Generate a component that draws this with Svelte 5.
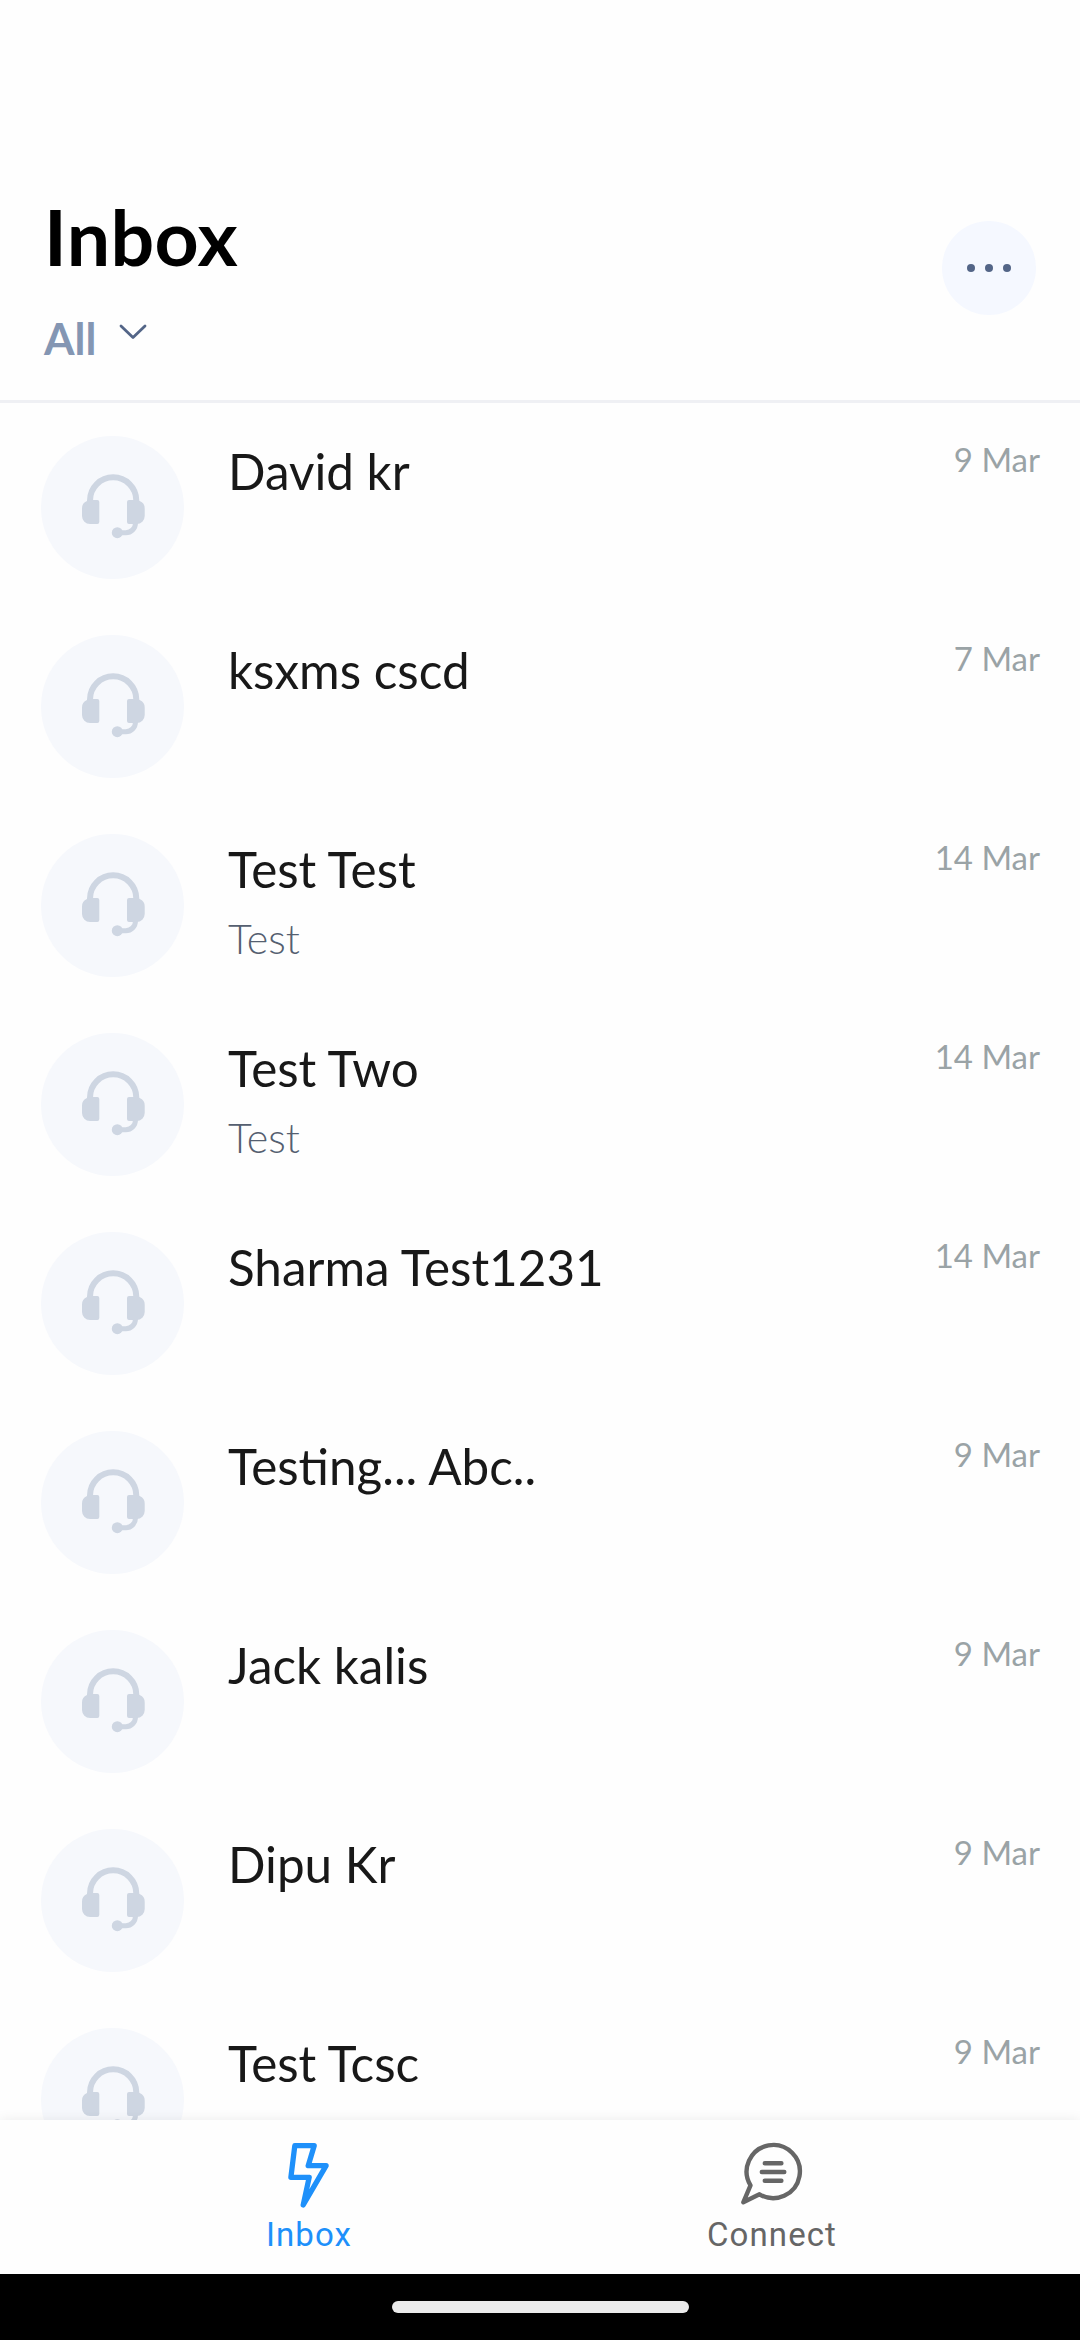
<script>
  const conversations = [
    { name: 'David kr', date: '9 Mar' },
    { name: 'ksxms cscd', date: '7 Mar' },
    { name: 'Test Test', date: '14 Mar', preview: 'Test' },
    { name: 'Test Two', date: '14 Mar', preview: 'Test' },
    { name: 'Sharma Test1231', date: '14 Mar' },
    { name: 'Testing... Abc..', date: '9 Mar' },
    { name: 'Jack kalis', date: '9 Mar' },
    { name: 'Dipu Kr', date: '9 Mar' },
    { name: 'Test Tcsc', date: '9 Mar' },
  ];
</script>

<div class="screen">
  <header>
    <div class="heading">
      <h1>Inbox</h1>
      <button class="filter">
        <span>All</span>
        <svg class="chevron" viewBox="0 0 28 16"><path d="M2 2 14 13.5 26 2" /></svg>
      </button>
    </div>
    <button class="more" aria-label="More">
      <svg viewBox="0 0 94 94">
        <circle cx="29" cy="47" r="4" /><circle cx="47" cy="47" r="4" /><circle cx="65" cy="47" r="4" />
      </svg>
    </button>
  </header>

  <main>
    {#each conversations as c}
      <div class="row">
        <svg class="avatar" viewBox="0 0 143 143">
          <circle class="disc" cx="71.5" cy="71.5" r="71.5" />
          <path class="band" d="M49 67V64.5a23.15 23.15 0 0 1 46.3 0V67" />
          <path class="pad" d="M49 64H56.3a2 2 0 0 1 2 2V86a2 2 0 0 1-2 2H49a8 8 0 0 1-8-8V72.5a8 8 0 0 1 5-7.5Z" />
          <path class="pad" d="M95.7 64H88a2 2 0 0 0-2 2V86a2 2 0 0 0 2 2h7.7a8 8 0 0 0 8-8V72.5a8 8 0 0 0-5-7.5Z" />
          <path class="arm" d="M94.5 87a9.7 9.7 0 0 1-9.7 9.7H76" />
          <circle class="pad" cx="76.3" cy="96.7" r="5.5" />
        </svg>
        <div class="text">
          <div class="name">{c.name}</div>
          {#if c.preview}<div class="preview">{c.preview}</div>{/if}
        </div>
        <time>{c.date}</time>
      </div>
    {/each}
  </main>

  <nav>
    <div class="tab active">
      <svg viewBox="0 0 66 66">
        <path class="bolt" d="M18.8 3.7H38.2L32.2 23.7H50.1L27.2 63 33.2 35.3H14.9Z" />
      </svg>
      <span>Inbox</span>
    </div>
    <div class="tab">
      <svg viewBox="0 0 66 66">
        <path class="bubble" d="M11.5 43.3A26.6 26.6 0 1 1 20.5 52.3L4.3 60.3Z" />
        <path class="lines" d="M25.8 21.3H42.4M22.8 30H45.300M25.8 38.7H42.4" />
      </svg>
      <span>Connect</span>
    </div>
  </nav>
  <div class="gesture"><i></i></div>
</div>

<style>
  :global(body) {
    margin: 0;
    background: #fefefe;
  }
  .screen {
    width: 1080px;
    height: 2340px;
    display: flex;
    flex-direction: column;
    overflow: hidden;
    background: #fefefe;
    font-family: Lato, sans-serif;
  }
  button {
    border: 0;
    padding: 0;
    background: none;
    font: inherit;
  }
  header {
    box-sizing: border-box;
    height: 403px;
    flex: none;
    padding: 190px 44px 0;
    border-bottom: 3px solid #eff0f4;
    display: flex;
    justify-content: space-between;
    background: #fefefe;
  }
  h1 {
    margin: 0;
    font-size: 77px;
    line-height: 92px;
    font-weight: 700;
    letter-spacing: 0.4px;
    color: #000;
  }
  .filter {
    margin-top: 29px;
    display: flex;
    align-items: flex-start;
    gap: 23px;
    font-size: 44px;
    line-height: 54px;
    font-weight: 700;
    color: #8496b3;
  }
  .chevron {
    width: 28px;
    height: 16px;
    margin-top: 13px;
    fill: none;
    stroke: #536587;
    stroke-width: 2.8;
    stroke-linecap: round;
    stroke-linejoin: round;
  }
  .more {
    width: 94px;
    height: 94px;
    margin: 31px 0 0;
    border-radius: 50%;
    background: #f5f8ff;
  }
  .more svg {
    display: block;
    fill: #536587;
  }
  main {
    flex: 1;
    min-height: 0;
    overflow: hidden;
    padding-top: 33px;
  }
  .row {
    height: 199px;
    padding: 0 40px 0 41px;
    display: flex;
    align-items: flex-start;
  }
  .avatar {
    width: 143px;
    height: 143px;
    flex: none;
  }
  .disc {
    fill: #f6f8fc;
  }
  .band,
  .arm {
    fill: none;
    stroke: #ced6e2;
    stroke-width: 6;
  }
  .arm {
    stroke-width: 5;
  }
  .pad {
    fill: #ced6e2;
  }
  .text {
    flex: 1;
    padding: 5px 0 0 44px;
  }
  .name {
    font-size: 49.4px;
    line-height: 60px;
    color: #181818;
  }
  .preview {
    margin-top: 14px;
    font-size: 41.25px;
    line-height: 50px;
    font-weight: 300;
    color: #555f70;
  }
  time {
    margin-top: 3px;
    font-size: 33px;
    line-height: 40px;
    color: #9aa3a6;
  }
  nav {
    flex: none;
    height: 154px;
    padding: 0 77px;
    display: grid;
    grid-template-columns: 1fr 1fr;
    background: #fefefe;
    box-shadow: 0 0 12px rgba(0, 0, 0, 0.08);
    position: relative;
  }
  .tab {
    display: flex;
    flex-direction: column;
    align-items: center;
    padding-top: 22px;
    color: #666;
    font: 33px/40px Roboto, sans-serif;
    letter-spacing: 1.1px;
  }
  .active {
    color: #1e90fa;
  }
  .tab svg {
    width: 66px;
    height: 66px;
    fill: none;
    stroke: currentColor;
    stroke-linecap: round;
    stroke-linejoin: round;
  }
  .tab span {
    margin-top: 7px;
    padding-left: 1px;
  }
  .bolt {
    stroke-width: 5.3;
  }
  .bubble,
  .lines {
    stroke-width: 4.4;
  }
  .gesture {
    flex: none;
    height: 66px;
    background: #000;
    position: relative;
    display: flex;
    justify-content: center;
    align-items: center;
  }
  .gesture i {
    width: 297px;
    height: 12px;
    border-radius: 6px;
    background: #ebebeb;
  }
</style>
